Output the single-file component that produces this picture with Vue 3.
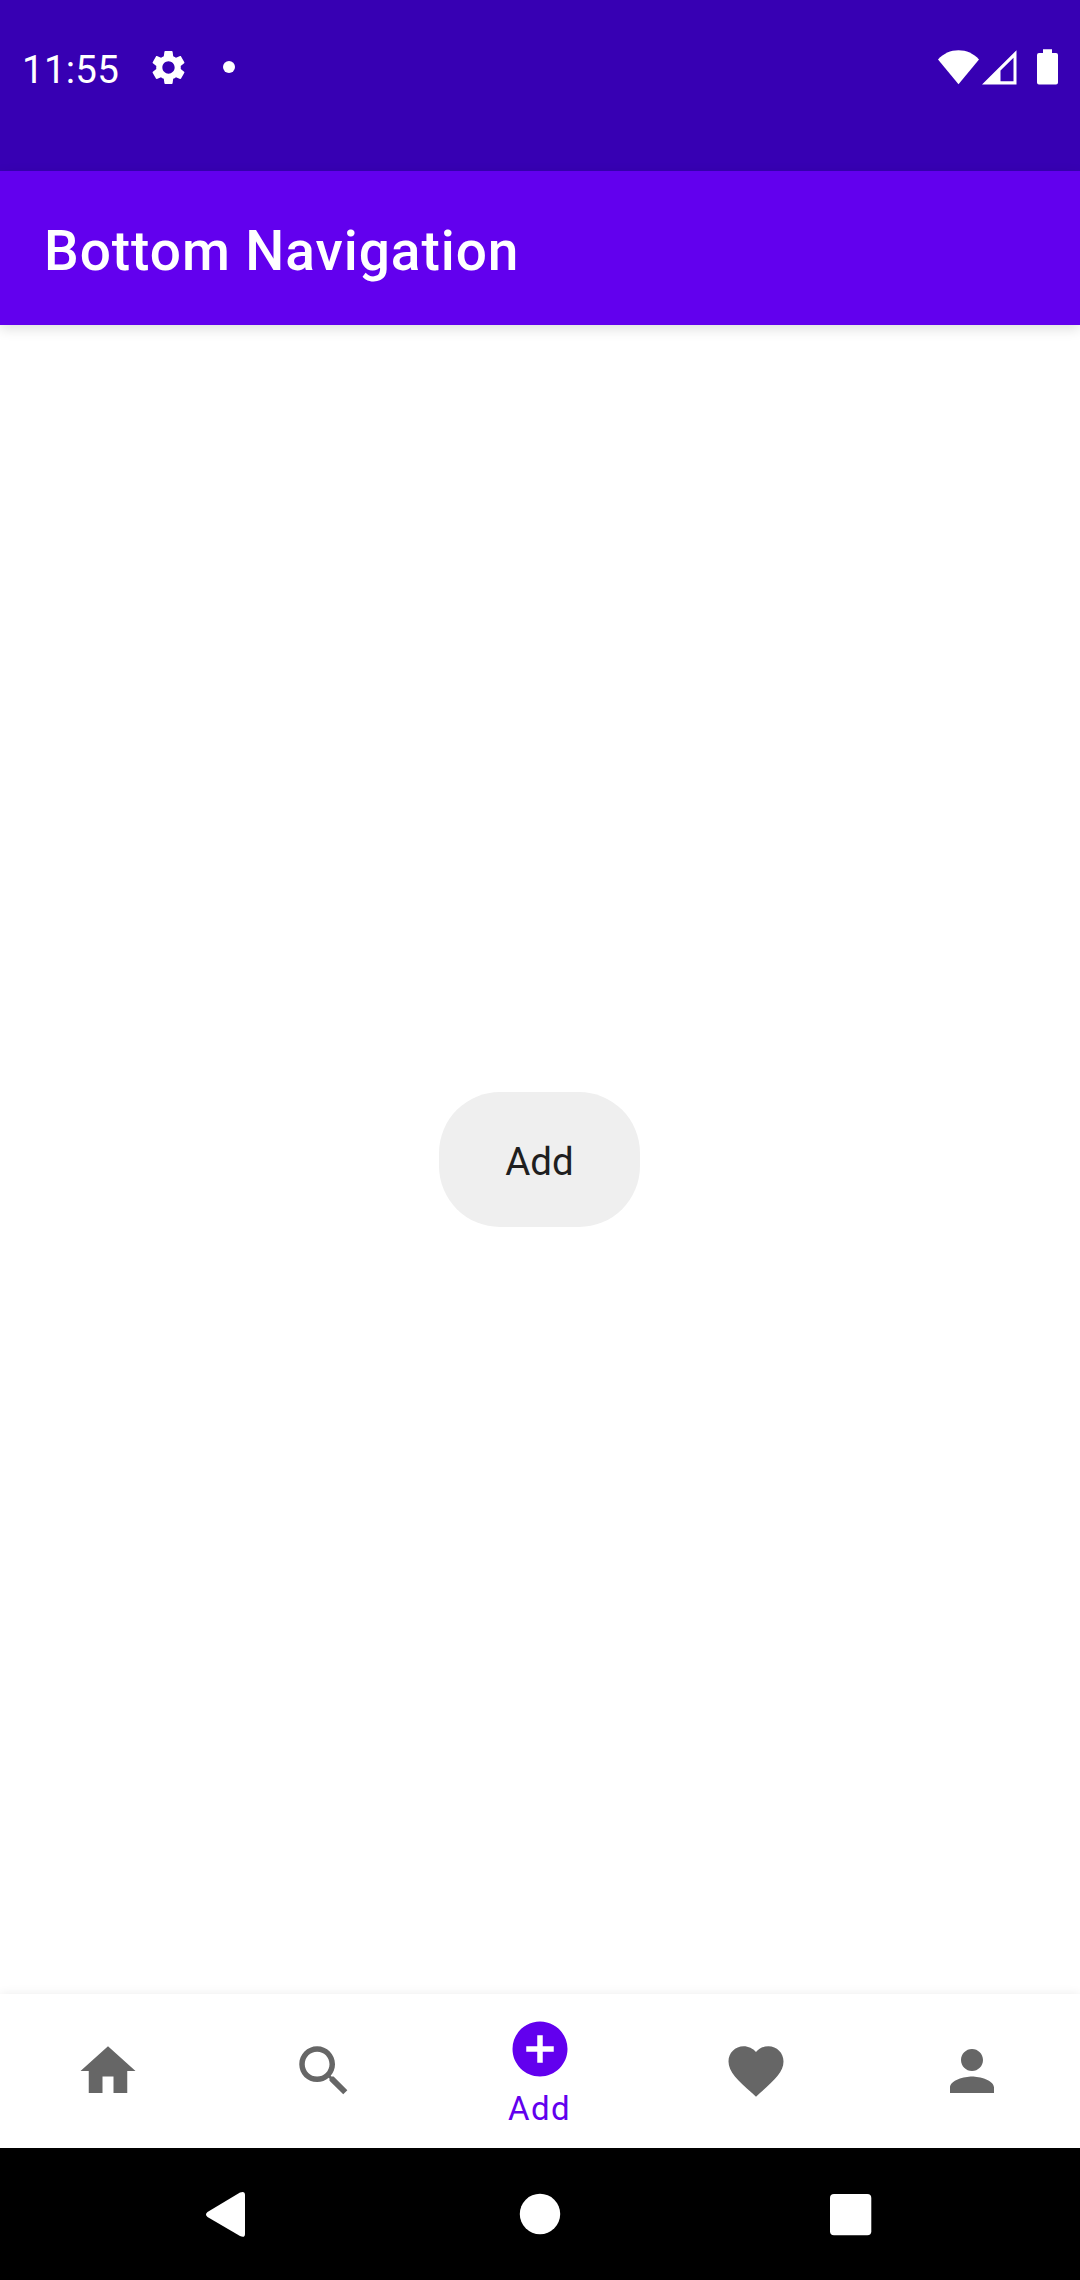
<script setup>
import { ref } from 'vue'

const tabs = [
  { label: 'Home', path: 'M10 20v-6h4v6h5v-8h3L12 3 2 12h3v8z' },
  {
    label: 'Search',
    path: 'M15.5 14h-.79l-.28-.27C15.41 12.59 16 11.11 16 9.5 16 5.91 13.09 3 9.5 3S3 5.91 3 9.5 5.91 16 9.5 16c1.61 0 3.09-.59 4.23-1.57l.27.28v.79l5 4.99L20.49 19l-4.99-5zm-6 0C7.01 14 5 11.99 5 9.5S7.01 5 9.5 5 14 7.01 14 9.5 11.99 14 9.5 14z',
  },
  {
    label: 'Add',
    path: 'M12 2C6.48 2 2 6.48 2 12s4.48 10 10 10 10-4.48 10-10S17.52 2 12 2zm5 11h-4v4h-2v-4H7v-2h4V7h2v4h4v2z',
  },
  {
    label: 'Favorites',
    path: 'M12 21.35l-1.45-1.32C5.4 15.36 2 12.28 2 8.5 2 5.42 4.42 3 7.5 3c1.74 0 3.41.81 4.5 2.09C13.09 3.81 14.76 3 16.5 3 19.58 3 22 5.42 22 8.5c0 3.78-3.4 6.86-8.55 11.54L12 21.35z',
  },
  {
    label: 'Profile',
    path: 'M12 12c2.21 0 4-1.79 4-4s-1.79-4-4-4-4 1.79-4 4 1.79 4 4 4zm0 2c-2.67 0-8 1.34-8 4v2h16v-2c0-2.66-5.33-4-8-4z',
  },
]
const selected = ref(2)
</script>

<template>
  <div class="screen">
    <header class="status">
      <span class="clock">11:55</span>
      <svg class="gear" viewBox="0 0 24 24">
        <path d="M19.14 12.94c.04-.3.06-.61.06-.94 0-.32-.02-.64-.07-.94l2.03-1.58c.18-.14.23-.41.12-.61l-1.92-3.32c-.12-.22-.37-.29-.59-.22l-2.39.96c-.5-.38-1.03-.7-1.62-.94l-.36-2.54c-.04-.24-.24-.41-.48-.41h-3.84c-.24 0-.43.17-.47.41l-.36 2.54c-.59.24-1.13.57-1.62.94l-2.39-.96c-.22-.08-.47 0-.59.22L2.74 8.87c-.12.21-.08.47.12.61l2.03 1.58c-.05.3-.09.63-.09.94s.02.64.07.94l-2.03 1.58c-.18.14-.23.41-.12.61l1.92 3.32c.12.22.37.29.59.22l2.39-.96c.5.38 1.03.7 1.62.94l.36 2.54c.05.24.24.41.48.41h3.84c.24 0 .44-.17.47-.41l.36-2.54c.59-.24 1.13-.56 1.62-.94l2.39.96c.22.08.47 0 .59-.22l1.92-3.32c.12-.22.07-.47-.12-.61l-2.01-1.58zM12 15.6c-1.98 0-3.6-1.62-3.6-3.6s1.62-3.6 3.6-3.6 3.6 1.62 3.6 3.6-1.62 3.6-3.6 3.6z" />
      </svg>
      <span class="dot"></span>
      <div class="indicators">
        <svg width="42" height="36" viewBox="0 0 42 36">
          <path d="M0 10.500C5.500 4.300 12.500 1.200 20.500 1.200S35.500 4.300 41 10.500L20.500 35.300z" />
        </svg>
        <svg class="signal" width="36" height="36" viewBox="0 0 36 36">
          <path fill-rule="evenodd" d="M0 35.600L34.500 1.200V35.600zM18.500 21.500V32.300H31.500V8.800z" />
        </svg>
        <svg class="battery" width="21" height="36" viewBox="0 0 21 36">
          <path d="M6 0.300H15V4H19Q21 4 21 6V33.500Q21 35.500 19 35.500H2Q0 35.500 0 33.500V6Q0 4 2 4H6z" />
        </svg>
      </div>
    </header>

    <div class="appbar"><h1>Bottom Navigation</h1></div>

    <main class="content">
      <div class="chip">Add</div>
    </main>

    <nav class="tabs">
      <button
        v-for="(tab, i) in tabs"
        :key="tab.label"
        class="tab"
        :class="{ active: i === selected }"
        :aria-label="tab.label"
        @click="selected = i"
      >
        <svg viewBox="0 0 24 24"><path :d="tab.path" /></svg>
        <span v-if="i === selected">{{ tab.label }}</span>
      </button>
    </nav>

    <footer class="system">
      <div class="key">
        <svg width="60" height="60" viewBox="200 2184 60 60">
          <path d="M207.500 2212L240 2192.500Q245 2190.500 245 2195V2234Q245 2238.300 240 2236L207.500 2217Q204.500 2214.500 207.500 2212z" />
        </svg>
      </div>
      <div class="key">
        <svg width="60" height="60" viewBox="510 2184 60 60"><circle cx="540" cy="2214" r="20.2" /></svg>
      </div>
      <div class="key">
        <svg width="60" height="60" viewBox="820 2184 60 60"><rect x="830" y="2194" width="41.300" height="41.300" rx="4" /></svg>
      </div>
    </footer>
  </div>
</template>

<style>
body {
  margin: 0;
  background: #fff;
}
</style>

<style scoped>
.screen {
  display: flex;
  flex-direction: column;
  width: 1080px;
  height: 2280px;
  overflow: hidden;
  background: #fff;
  font-family: Roboto, 'Noto Sans', sans-serif;
}
svg {
  display: block;
  flex: none;
  fill: currentColor;
}
.status {
  display: flex;
  align-items: center;
  box-sizing: border-box;
  height: 171px;
  padding: 0 22px 37px;
  background: #3700b3;
  color: #fff;
}
.clock {
  width: 126px;
  padding-top: 6px;
  font-size: 38.5px;
  line-height: 46px;
  letter-spacing: 0.25px;
}
.gear {
  width: 41px;
  height: 41px;
  margin-top: 1px;
}
.dot {
  width: 12px;
  height: 12px;
  margin-left: 34px;
  border-radius: 50%;
  background: #fff;
}
.indicators {
  display: flex;
  margin-left: auto;
}
.signal {
  margin-left: 2px;
}
.battery {
  margin-left: 19px;
}
.appbar {
  position: relative;
  z-index: 1;
  display: flex;
  align-items: center;
  flex: none;
  height: 154px;
  padding-left: 44px;
  background: #6200ee;
  color: #fff;
  box-shadow: 0 4px 12px rgba(0, 0, 0, 0.13);
}
h1 {
  margin: 6px 0 0;
  font-size: 55px;
  font-weight: 500;
  line-height: 66px;
  letter-spacing: 0.95px;
}
.content {
  display: flex;
  flex: 1;
  align-items: center;
  justify-content: center;
}
.chip {
  box-sizing: border-box;
  width: 201px;
  height: 135px;
  margin-right: 1px;
  padding-top: 2px;
  border-radius: 61px;
  background: #efefef;
  color: #1f1f1f;
  font-size: 38.5px;
  line-height: 135px;
  text-align: center;
}
.tabs {
  position: relative;
  z-index: 1;
  display: flex;
  flex: none;
  height: 154px;
  background: #fff;
  box-shadow: 0 0 10px rgba(0, 0, 0, 0.08);
}
.tab {
  display: flex;
  flex: 1;
  flex-direction: column;
  align-items: center;
  justify-content: center;
  padding: 0;
  border: 0;
  background: none;
  color: #666;
  font: 400 33px/44px Roboto, 'Noto Sans', sans-serif;
  letter-spacing: 1.4px;
}
.tab svg {
  width: 66px;
  height: 66px;
}
.tab span {
  margin: 5px 1px -5px 0;
}
.tab.active {
  color: #6200ee;
}
.system {
  display: flex;
  flex: none;
  height: 132px;
  padding: 0 75px;
  background: #000;
  color: #fff;
}
.key {
  display: flex;
  flex: 1;
  align-items: center;
  justify-content: center;
}
</style>
